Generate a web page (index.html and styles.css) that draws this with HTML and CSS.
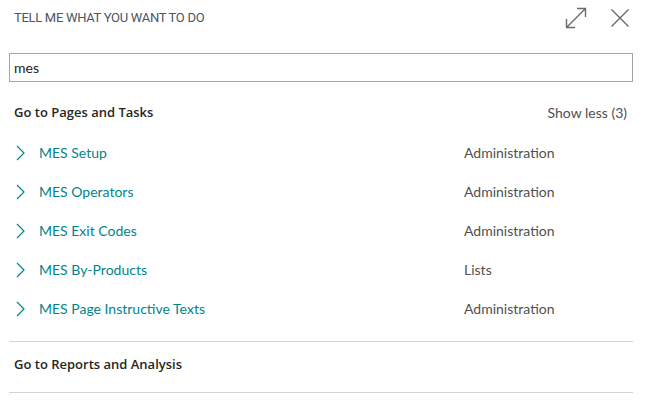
FILE: index.html
```html
<!DOCTYPE html>
<html>
<head>
<meta charset="utf-8">
<link rel="stylesheet" href="styles.css">
</head>
<body>
<div class="dialog">
  <div class="header">
    <div class="title">TELL ME WHAT YOU WANT TO DO</div>
    <div class="actions">
      <svg class="icon" width="24" height="22" viewBox="0 0 24 22">
        <path d="M2.5 20.5 L21.5 1.5 M13 1.5 H21.5 V10 M2.5 12 V20.5 H11" fill="none" stroke="#6b6b6b" stroke-width="1.4"/>
      </svg>
      <svg class="icon" width="20" height="20" viewBox="0 0 20 20">
        <path d="M1.5 1.5 L18.5 18.5 M18.5 1.5 L1.5 18.5" fill="none" stroke="#6b6b6b" stroke-width="1.4"/>
      </svg>
    </div>
  </div>
  <div class="search"><span>mes</span></div>
  <div class="section-head">
    <span class="heading">Go to Pages and Tasks</span>
    <span class="more">Show less (3)</span>
  </div>
  <ul class="list">
    <li class="row"><svg class="chev" width="9" height="16" viewBox="0 0 9 16"><path d="M1 1 L8 8 L1 15" fill="none" stroke="#00858a" stroke-width="1.2"/></svg><span class="name">MES Setup</span><span class="cat">Administration</span></li>
    <li class="row"><svg class="chev" width="9" height="16" viewBox="0 0 9 16"><path d="M1 1 L8 8 L1 15" fill="none" stroke="#00858a" stroke-width="1.2"/></svg><span class="name">MES Operators</span><span class="cat">Administration</span></li>
    <li class="row"><svg class="chev" width="9" height="16" viewBox="0 0 9 16"><path d="M1 1 L8 8 L1 15" fill="none" stroke="#00858a" stroke-width="1.2"/></svg><span class="name">MES Exit Codes</span><span class="cat">Administration</span></li>
    <li class="row"><svg class="chev" width="9" height="16" viewBox="0 0 9 16"><path d="M1 1 L8 8 L1 15" fill="none" stroke="#00858a" stroke-width="1.2"/></svg><span class="name">MES By-Products</span><span class="cat">Lists</span></li>
    <li class="row"><svg class="chev" width="9" height="16" viewBox="0 0 9 16"><path d="M1 1 L8 8 L1 15" fill="none" stroke="#00858a" stroke-width="1.2"/></svg><span class="name">MES Page Instructive Texts</span><span class="cat">Administration</span></li>
  </ul>
  <div class="section-foot">
    <span class="heading">Go to Reports and Analysis</span>
  </div>
</div>
</body>
</html>
```
FILE: styles.css
```css
* { box-sizing: border-box; }
html, body { margin: 0; padding: 0; background: #fff; }
body { font-family: "Lato", "Open Sans", sans-serif; width: 649px; height: 401px; overflow: hidden; }
.dialog { padding: 0 16px 0 9px; }
.header { display: flex; justify-content: space-between; align-items: center; height: 35px; padding-left: 5px; }
.title { font-family: "Roboto", sans-serif; font-size: 13px; font-weight: 400; color: #4a5566; letter-spacing: -0.3px; }
.actions { display: flex; align-items: center; gap: 22px; padding-right: 3px; margin-top: 0; }
.icon { display: block; }
.search { margin-top: 18px; height: 29px; border: 1px solid #a6a6a6; padding: 0 4px; display: flex; align-items: center; font-size: 14px; color: #212121; }
.section-head { display: flex; justify-content: space-between; align-items: center; height: 36px; margin-top: 12px; padding: 0 6px 0 5px; }
.heading { font-family: "Open Sans", sans-serif; font-size: 13px; font-weight: 600; color: #262626; }
.more { font-size: 14px; color: #505050; }
.list { list-style: none; margin: 0; padding: 0 0 13px 0; border-bottom: 1px solid #d4d4d4; margin-top: 3px; }
.row { display: flex; align-items: center; height: 39px; padding-left: 7px; }
.chev { margin-right: 14px; display: block; }
.name { width: 425px; font-size: 14px; color: #00858a; }
.cat { font-size: 14px; color: #505050; }
.section-foot { height: 51px; border-bottom: 1px solid #d4d4d4; display: flex; align-items: center; padding-left: 5px; padding-bottom: 7px; }
```
